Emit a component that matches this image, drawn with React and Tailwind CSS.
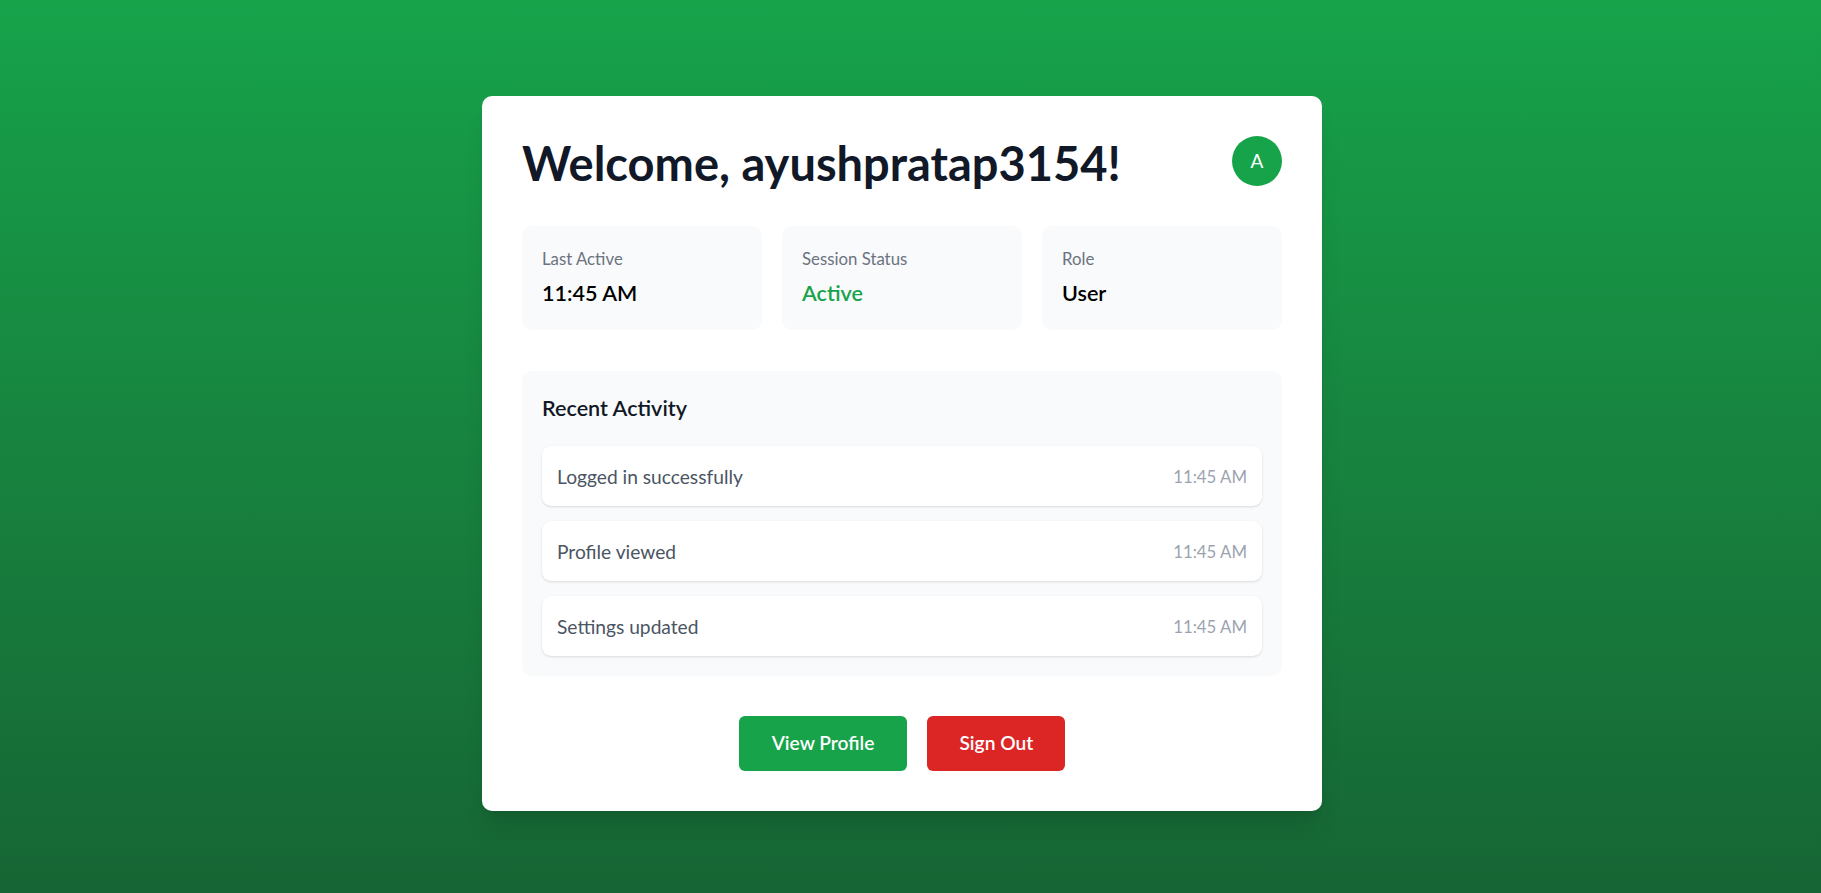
import React from 'react';

const activities = [
  { label: 'Logged in successfully', time: '11:45 AM' },
  { label: 'Profile viewed', time: '11:45 AM' },
  { label: 'Settings updated', time: '11:45 AM' },
];

const App = () => {
  return (
    <div
      className="min-h-screen bg-gradient-to-b from-[#16a34a] to-[#166534] flex justify-center pt-[96px] pb-[82px] pr-[17px]"
      style={{ fontFamily: 'Lato, "Segoe UI", sans-serif' }}
    >
      <div className="w-[840px] h-fit bg-white rounded-[10px] shadow-xl p-10">
        {/* Header */}
        <div className="flex items-start justify-between mb-[39px]">
          <h1 className="text-[47px] leading-none pt-[4px] font-bold text-[#111827]">
            Welcome, ayushpratap3154!
          </h1>
          <div className="w-[50px] h-[50px] rounded-full bg-[#16a34a] flex items-center justify-center text-white text-[19px]">
            A
          </div>
        </div>

        {/* Stats */}
        <div className="grid grid-cols-3 gap-5 mb-[41px]">
          <div className="bg-[#f9fafb] rounded-[10px] p-5 h-[104px]">
            <p className="text-[16.8px] text-[#6b7280] mb-[6px]">Last Active</p>
            <p className="text-[21.6px] font-semibold text-black">11:45 AM</p>
          </div>
          <div className="bg-[#f9fafb] rounded-[10px] p-5 h-[104px]">
            <p className="text-[16.8px] text-[#6b7280] mb-[6px]">Session Status</p>
            <p className="text-[21.6px] font-semibold text-[#16a34a]">Active</p>
          </div>
          <div className="bg-[#f9fafb] rounded-[10px] p-5 h-[104px]">
            <p className="text-[16.8px] text-[#6b7280] mb-[6px]">Role</p>
            <p className="text-[21.6px] font-semibold text-black">User</p>
          </div>
        </div>

        {/* Recent Activity */}
        <div className="bg-[#f9fafb] rounded-[10px] p-5 mb-10">
          <h2 className="text-[21.6px] leading-[34px] font-semibold text-[#111827] mb-[21px]">
            Recent Activity
          </h2>
          <div className="flex flex-col gap-[15px]">
            {activities.map((a) => (
              <div
                key={a.label}
                className="bg-white rounded-[9px] shadow-sm h-[60px] px-[15px] pt-[2px] flex items-center justify-between"
              >
                <span className="text-[19.2px] text-[#4b5563]">{a.label}</span>
                <span className="text-[16.8px] text-[#9ca3af]">{a.time}</span>
              </div>
            ))}
          </div>
        </div>

        {/* Actions */}
        <div className="flex justify-center gap-5">
          <button className="h-[55px] px-[33px] bg-[#16a34a] text-white text-[19.2px] font-semibold rounded-[6px]">
            View Profile
          </button>
          <button className="h-[55px] px-[32px] bg-[#dc2626] text-white text-[19.2px] font-semibold rounded-[6px]">
            Sign Out
          </button>
        </div>
      </div>
    </div>
  );
};

export default App;
